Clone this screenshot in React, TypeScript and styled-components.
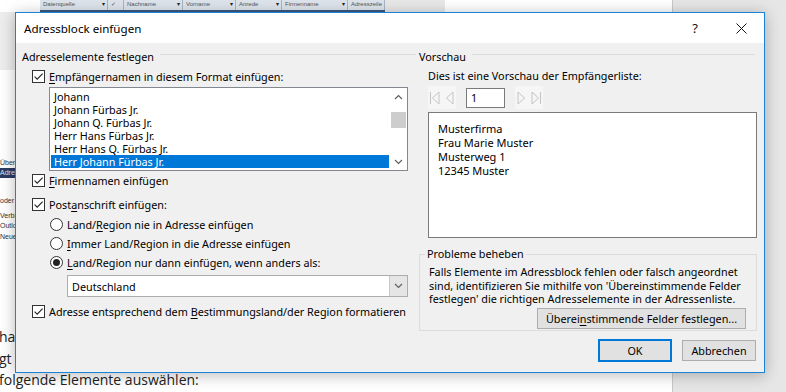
import styled, { createGlobalStyle } from "styled-components";

const GlobalStyle = createGlobalStyle`
  html, body {
    margin: 0;
    padding: 0;
    background: #ffffff;
  }
  body {
    font-family: "Noto Sans", "Open Sans", sans-serif;
  }
`;

const UI_FONT = `"Noto Sans", "Open Sans", sans-serif`;

const Box = () => (
  <svg width="13" height="13" viewBox="0 0 13 13">
    <rect x="0.5" y="0.5" width="12" height="12" fill="#fff" stroke="#333" />
    <path d="M2.6 6.6 L5.2 9.2 L10.6 3.6" fill="none" stroke="#222" strokeWidth="1.1" />
  </svg>
);

const Radio = ({ on }: { on?: boolean }) => (
  <svg width="13" height="13" viewBox="0 0 13 13">
    <circle cx="6.5" cy="6.5" r="6" fill="#fff" stroke="#333" />
    {on && <circle cx="6.5" cy="6.5" r="3.5" fill="#222" />}
  </svg>
);

const Chevron = ({ dir }: { dir: "up" | "down" }) => (
  <svg width="9" height="6" viewBox="0 0 9 6">
    <path
      d={dir === "up" ? "M1 5 L4.5 1.5 L8 5" : "M1 1 L4.5 4.5 L8 1"}
      fill="none"
      stroke="#606060"
      strokeWidth="1.2"
    />
  </svg>
);

const NavIcon = ({ kind }: { kind: "first" | "prev" | "next" | "last" }) => {
  const left = kind === "first" || kind === "prev";
  const bar = kind === "first" || kind === "last";
  return (
    <svg width="12" height="18" viewBox="0 0 12 18">
      {left ? (
        <path d="M10 3 L3.5 9 L10 15 Z" fill="none" stroke="#c4c4c4" />
      ) : (
        <path d="M2 3 L8.5 9 L2 15 Z" fill="none" stroke="#c4c4c4" />
      )}
      {bar && (left ? <path d="M1.5 3 V15" stroke="#c4c4c4" /> : <path d="M10.5 3 V15" stroke="#c4c4c4" />)}
    </svg>
  );
};

const Desktop = styled.div`
  position: relative;
  width: 786px;
  height: 392px;
  overflow: hidden;
  display: flex;
  background: #ffffff;
`;

/* ---------- Word window behind ---------- */

const DocArea = styled.div`
  width: 672px;
  display: flex;
  flex-direction: column;
  background: #ffffff;
`;

const SidePanel = styled.div`
  flex: 1;
  background: #e6e6e6;
  border-left: 1px solid #c8c8c8;
`;

const HeaderStrip = styled.div`
  height: 12px;
  display: flex;
`;

const HeaderBlank = styled.div<{ $w: number; $bg: string }>`
  width: ${(p) => p.$w}px;
  background: ${(p) => p.$bg};
`;

const TableHead = styled.div`
  display: flex;
  border-bottom: 2px solid #3c5a7c;
  background: #dde4ec;
`;

const HeadCell = styled.div<{ $w: number }>`
  width: ${(p) => p.$w}px;
  height: 10px;
  border-right: 1px solid #a9b5c4;
  font: 6px/9px "Liberation Sans", sans-serif;
  color: #555;
  padding-left: 3px;
  box-sizing: border-box;
  overflow: hidden;
  white-space: nowrap;
  display: flex;
  justify-content: space-between;
  &::after {
    content: ${(p) => (p.$w > 45 ? `"▾"` : `""`)};
    padding-right: 2px;
    color: #222;
  }
`;

const PaneBand = styled.div`
  height: 58px;
  background: #ededed;
`;

const PaneText = styled.div<{ $mt: number }>`
  margin-top: ${(p) => p.$mt}px;
  font: 7px/10px "Liberation Sans", sans-serif;
  color: #333;
  white-space: nowrap;
`;

const PaneBar = styled.div`
  height: 10px;
  width: 80px;
  background: #2b3c63;
  font: 7px/10px "Liberation Sans", sans-serif;
  color: #dfe6f0;
`;

const DocLines = styled.div`
  margin-top: 84px;
  display: flex;
  flex-direction: column;
`;

const DocLine = styled.div`
  font: 14px/21.5px "Open Sans", sans-serif;
  color: #222;
  white-space: nowrap;
  margin-left: -1px;
`;

/* ---------- Dialog ---------- */

const Dialog = styled.div`
  position: absolute;
  left: 15px;
  top: 12px;
  width: 750px;
  height: 361px;
  box-sizing: border-box;
  border: 1px solid #1883d7;
  background: #f0f0f0;
  box-shadow: 0 2px 14px rgba(0, 0, 0, 0.28);
  display: flex;
  flex-direction: column;
  font-family: ${UI_FONT};
  font-size: 10.8px;
  color: #000;
`;

const TitleBar = styled.div`
  height: 30px;
  background: #ffffff;
  display: flex;
  align-items: center;
  padding-left: 8px;
`;

const Title = styled.div`
  flex: 1;
  font-size: 11.6px;
`;

const TitleButton = styled.div`
  width: 46px;
  height: 30px;
  display: flex;
  align-items: center;
  justify-content: center;
  font-size: 13px;
  color: #111;
`;

const Body = styled.div`
  flex: 1;
  display: flex;
  min-width: 0;
`;

const LeftCol = styled.div`
  width: 402px;
  flex: none;
  padding-left: 6px;
  box-sizing: border-box;
  display: flex;
  flex-direction: column;
`;

const RightCol = styled.div`
  flex: 1;
  min-width: 0;
  padding: 0 7px 0 1px;
  display: flex;
  flex-direction: column;
`;

const GroupHeader = styled.div`
  margin-top: 5px;
  height: 16px;
  display: flex;
  align-items: center;
  gap: 6px;
  padding-right: 2px;
  &::after {
    content: "";
    flex: 1;
    height: 1px;
    margin-top: -3px;
    background: #dcdcdc;
  }
`;

const OptionRow = styled.label<{ $mt: number; $indent: number }>`
  margin-top: ${(p) => p.$mt}px;
  margin-left: ${(p) => p.$indent}px;
  height: 18px;
  display: flex;
  align-items: center;
  gap: 4px;
  white-space: nowrap;
  svg {
    flex: none;
  }
`;

const Key = styled.span`
  text-decoration: underline;
  text-underline-offset: 2px;
`;

const ListBox = styled.div`
  margin: 2px 10px 0 27px;
  height: 84px;
  box-sizing: border-box;
  border: 1px solid #828790;
  background: #fff;
  display: flex;
`;

const ListItems = styled.div`
  flex: 1;
  padding: 2px 1px 0 1px;
  display: flex;
  flex-direction: column;
`;

const ListItem = styled.div<{ $selected?: boolean }>`
  height: 13px;
  line-height: 13px;
  padding-left: 3px;
  white-space: nowrap;
  background: ${(p) => (p.$selected ? "#0078d7" : "transparent")};
  color: ${(p) => (p.$selected ? "#fff" : "#000")};
`;

const ScrollBar = styled.div`
  width: 17px;
  display: flex;
  flex-direction: column;
  align-items: center;
  background: #fff;
`;

const ScrollArrow = styled.div`
  height: 17px;
  width: 17px;
  display: flex;
  align-items: center;
  justify-content: center;
`;

const ScrollTrack = styled.div`
  flex: 1;
  width: 17px;
  padding-top: 7px;
`;

const ScrollThumb = styled.div`
  margin: 0 auto;
  width: 15px;
  height: 16px;
  background: #cdcdcd;
`;

const Combo = styled.div`
  margin: 4px 10px 0 45px;
  height: 22px;
  box-sizing: border-box;
  border: 1px solid #adadad;
  background: #fff;
  display: flex;
  align-items: center;
`;

const ComboText = styled.div`
  flex: 1;
  padding-left: 4px;
`;

const ComboButton = styled.div`
  width: 17px;
  height: 20px;
  background: #e5e5e5;
  border-left: 1px solid #c8c8c8;
  display: flex;
  align-items: center;
  justify-content: center;
`;

const Hint = styled.div`
  margin: 3px 0 0 9px;
  height: 18px;
  line-height: 18px;
`;

const NavRow = styled.div`
  margin: 1px 0 0 9px;
  height: 23px;
  display: flex;
  align-items: center;
  gap: 10px;
`;

const NavPair = styled.div`
  display: flex;
  height: 23px;
`;

const NavBtn = styled.div`
  width: 14px;
  height: 23px;
  background: #f6f6f6;
  display: flex;
  align-items: center;
  justify-content: center;
`;

const RecordInput = styled.div`
  width: 39px;
  height: 20px;
  box-sizing: border-box;
  border: 1px solid #7a7a7a;
  background: #fff;
  padding-left: 4px;
  line-height: 18px;
`;

const Preview = styled.div`
  margin: 3px 0 0 9px;
  height: 126px;
  box-sizing: border-box;
  border: 1px solid #7a7a7a;
  background: #fff;
  padding: 9px 0 0 9px;
  line-height: 14px;
  font-size: 11px;
`;

const Trouble = styled.fieldset`
  margin: 9px 0 0 0;
  padding: 4px 10px 5px 9px;
  height: 84px;
  box-sizing: border-box;
  border: 1px solid #dcdcdc;
  display: flex;
  flex-direction: column;
`;

const TroubleLegend = styled.legend`
  padding: 0 2px;
  margin-left: -4px;
  line-height: 14px;
`;

const TroubleText = styled.div`
  line-height: 13.6px;
  white-space: nowrap;
`;

const Button = styled.div<{ $default?: boolean; $w: number }>`
  width: ${(p) => p.$w}px;
  height: ${(p) => (p.$default ? 23 : 21)}px;
  box-sizing: border-box;
  border: ${(p) => (p.$default ? "2px solid #0078d7" : "1px solid #adadad")};
  background: #e1e1e1;
  display: flex;
  align-items: center;
  justify-content: center;
  white-space: nowrap;
`;

const TroubleActions = styled.div`
  margin-top: 2px;
  display: flex;
  justify-content: flex-end;
`;

const Footer = styled.div`
  margin-top: 8px;
  display: flex;
  justify-content: flex-end;
  align-items: center;
  gap: 10px;
  padding-right: 1px;
`;

const names = [
  "Johann",
  "Johann Fürbas Jr.",
  "Johann Q. Fürbas Jr.",
  "Herr Hans Fürbas Jr.",
  "Herr Hans Q. Fürbas Jr.",
  "Herr Johann Fürbas Jr.",
];

const App = () => {
  return (
    <>
      <GlobalStyle />
      <Desktop>
        <DocArea>
          <HeaderStrip>
            <HeaderBlank $w={40} $bg="#ffffff" />
            <TableHead>
              <HeadCell $w={68}>Datenquelle</HeadCell>
              <HeadCell $w={16}>✓</HeadCell>
              <HeadCell $w={59}>Nachname</HeadCell>
              <HeadCell $w={53}>Vorname</HeadCell>
              <HeadCell $w={46}>Anrede</HeadCell>
              <HeadCell $w={66}>Firmenname</HeadCell>
              <HeadCell $w={37}>Adresszeile</HeadCell>
            </TableHead>
            <HeaderBlank $w={60} $bg="#e8e8e8" />
            <HeaderBlank $w={227} $bg="#ffffff" />
          </HeaderStrip>
          <PaneBand />
          <PaneText $mt={88}>Übereinstimmende</PaneText>
          <PaneBar>Adressblock</PaneBar>
          <PaneText $mt={18}>oder Einfügen</PaneText>
          <PaneText $mt={5}>Verbinden</PaneText>
          <PaneText $mt={0}>Outlook-Kontakte</PaneText>
          <PaneText $mt={1}>Neue Liste</PaneText>
          <DocLines>
            <DocLine>haben Sie den Adressblock</DocLine>
            <DocLine>gt werden. Hier können Sie</DocLine>
            <DocLine>folgende Elemente auswählen:</DocLine>
          </DocLines>
        </DocArea>
        <SidePanel />

        <Dialog>
          <TitleBar>
            <Title>Adressblock einfügen</Title>
            <TitleButton>?</TitleButton>
            <TitleButton>
              <svg width="11" height="11" viewBox="0 0 11 11">
                <path d="M0.5 0.5 L10.5 10.5 M10.5 0.5 L0.5 10.5" stroke="#111" strokeWidth="1" />
              </svg>
            </TitleButton>
          </TitleBar>
          <Body>
            <LeftCol>
              <GroupHeader>Adresselemente festlegen</GroupHeader>
              <OptionRow $mt={3} $indent={10}>
                <Box />
                <span>
                  <Key>E</Key>mpfängernamen in diesem Format einfügen:
                </span>
              </OptionRow>
              <ListBox>
                <ListItems>
                  {names.map((n, i) => (
                    <ListItem key={n} $selected={i === names.length - 1}>
                      {n}
                    </ListItem>
                  ))}
                </ListItems>
                <ScrollBar>
                  <ScrollArrow>
                    <Chevron dir="up" />
                  </ScrollArrow>
                  <ScrollTrack>
                    <ScrollThumb />
                  </ScrollTrack>
                  <ScrollArrow>
                    <Chevron dir="down" />
                  </ScrollArrow>
                </ScrollBar>
              </ListBox>
              <OptionRow $mt={0} $indent={10}>
                <Box />
                <span>
                  <Key>F</Key>irmennamen einfügen
                </span>
              </OptionRow>
              <OptionRow $mt={6} $indent={10}>
                <Box />
                <span>
                  Post<Key>a</Key>nschrift einfügen:
                </span>
              </OptionRow>
              <OptionRow $mt={2} $indent={28}>
                <Radio />
                <span>
                  Land/<Key>R</Key>egion nie in Adresse einfügen
                </span>
              </OptionRow>
              <OptionRow $mt={1} $indent={28}>
                <Radio />
                <span>
                  <Key>I</Key>mmer Land/Region in die Adresse einfügen
                </span>
              </OptionRow>
              <OptionRow $mt={1} $indent={28}>
                <Radio on />
                <span>
                  <Key>L</Key>and/Region nur dann einfügen, wenn anders als:
                </span>
              </OptionRow>
              <Combo>
                <ComboText>Deutschland</ComboText>
                <ComboButton>
                  <Chevron dir="down" />
                </ComboButton>
              </Combo>
              <OptionRow $mt={5} $indent={10}>
                <Box />
                <span>
                  Adresse entsprechend dem <Key>B</Key>estimmungsland/der Region formatieren
                </span>
              </OptionRow>
            </LeftCol>

            <RightCol>
              <GroupHeader>Vorschau</GroupHeader>
              <Hint>Dies ist eine Vorschau der Empfängerliste:</Hint>
              <NavRow>
                <NavPair>
                  <NavBtn>
                    <NavIcon kind="first" />
                  </NavBtn>
                  <NavBtn>
                    <NavIcon kind="prev" />
                  </NavBtn>
                </NavPair>
                <RecordInput>1</RecordInput>
                <NavPair>
                  <NavBtn>
                    <NavIcon kind="next" />
                  </NavBtn>
                  <NavBtn>
                    <NavIcon kind="last" />
                  </NavBtn>
                </NavPair>
              </NavRow>
              <Preview>
                <div>Musterfirma</div>
                <div>Frau Marie Muster</div>
                <div>Musterweg 1</div>
                <div>12345 Muster</div>
              </Preview>
              <Trouble>
                <TroubleLegend>Probleme beheben</TroubleLegend>
                <TroubleText>Falls Elemente im Adressblock fehlen oder falsch angeordnet</TroubleText>
                <TroubleText>sind, identifizieren Sie mithilfe von 'Übereinstimmende Felder</TroubleText>
                <TroubleText>festlegen' die richtigen Adresselemente in der Adressenliste.</TroubleText>
                <TroubleActions>
                  <Button $w={209}>
                    Überei<Key>n</Key>stimmende Felder festlegen...
                  </Button>
                </TroubleActions>
              </Trouble>
              <Footer>
                <Button $default $w={74}>
                  OK
                </Button>
                <Button $w={74}>Abbrechen</Button>
              </Footer>
            </RightCol>
          </Body>
        </Dialog>
      </Desktop>
    </>
  );
};

export default App;
